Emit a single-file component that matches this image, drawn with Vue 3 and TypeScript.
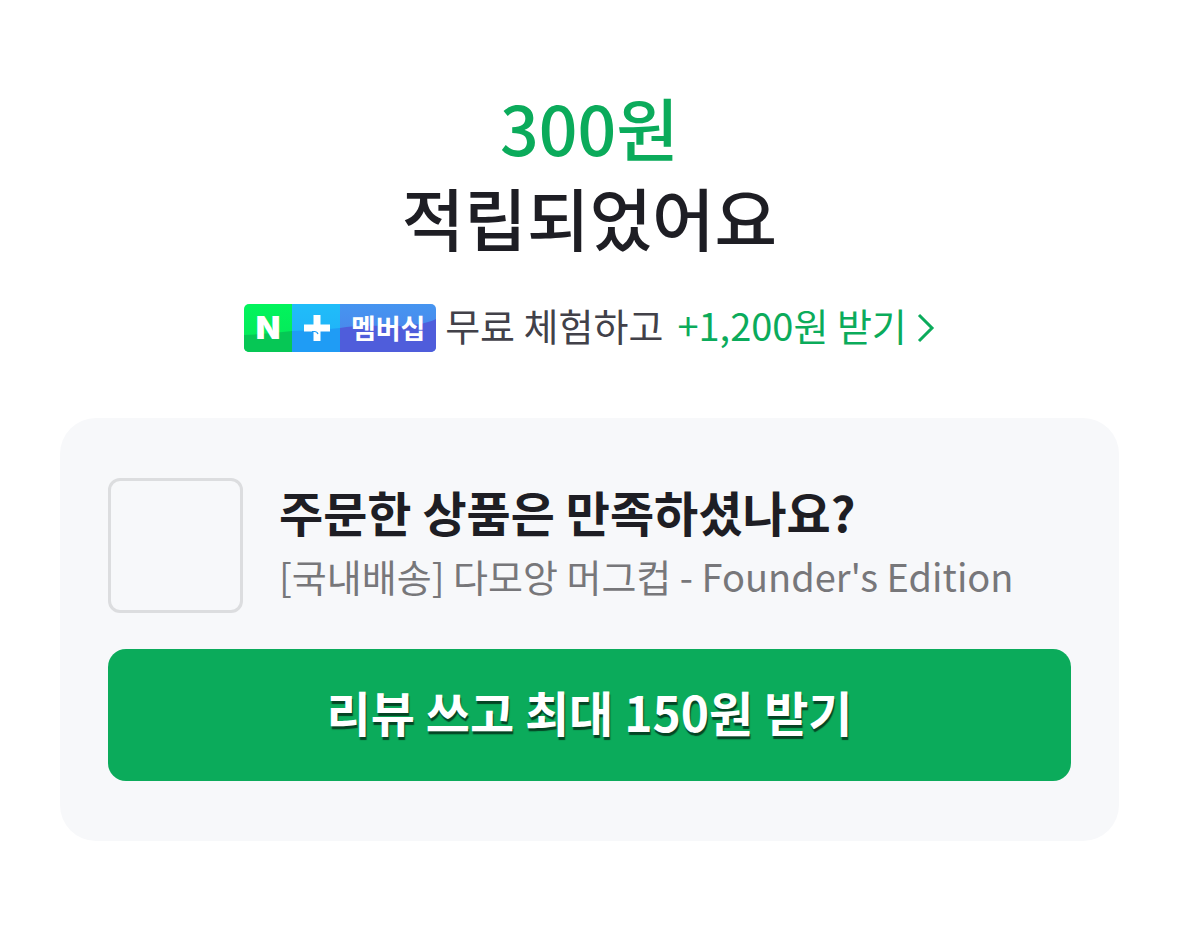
<script setup lang="ts">
interface Reward {
  amount: string
  message: string
}

interface Product {
  question: string
  name: string
  action: string
}

const reward: Reward = { amount: '300원', message: '적립되었어요' }

const product: Product = {
  question: '주문한 상품은 만족하셨나요?',
  name: "[국내배송] 다모앙 머그컵 - Founder's Edition",
  action: '리뷰 쓰고 최대 150원 받기',
}
</script>

<template>
  <main class="page">
    <h1 class="title">
      <span class="amount">{{ reward.amount }}</span>
      <span>{{ reward.message }}</span>
    </h1>

    <a class="membership" href="#">
      <span class="badge">
        <svg class="badge-bg" viewBox="0 0 192 48" aria-hidden="true">
          <defs>
            <linearGradient id="greenTop" x1="0" y1="0" x2="0" y2="1">
              <stop offset="0" stop-color="#02f45c" />
              <stop offset="1" stop-color="#06e65a" />
            </linearGradient>
            <linearGradient id="blueTop" x1="0" y1="0" x2="0" y2="1">
              <stop offset="0" stop-color="#20bdf9" />
              <stop offset="1" stop-color="#20aef8" />
            </linearGradient>
            <linearGradient id="indigoTop" x1="0" y1="0" x2="0" y2="1">
              <stop offset="0" stop-color="#4695f0" />
              <stop offset="1" stop-color="#4c7fea" />
            </linearGradient>
          </defs>
          <rect width="48" height="48" fill="url(#greenTop)" />
          <rect x="48" width="48" height="48" fill="url(#blueTop)" />
          <rect x="96" width="96" height="48" fill="url(#indigoTop)" />
          <path d="M0 31Q24 30 48 27V48H0Z" fill="#06c755" />
          <path d="M48 27Q72 27 96 24V48H48Z" fill="#1f9cf5" />
          <path d="M96 24Q112 21 144 22T192 15V48H96Z" fill="#4f5ddb" />
          <path d="M69.500 11H76.500V20.500H86V27.500H76.500V37H69.500V27.500H60V20.500H69.500Z" fill="#fff" />
          <path d="M68 27.500H70.500Q73 27.500 74 30" fill="none" stroke="#1f9cf5" stroke-width="1.200" />
        </svg>
        <span class="mark">N</span>
        <span class="badge-label">멤버십</span>
      </span>
      <span class="trial">무료 체험하고</span>
      <span class="benefit">+1,200원 받기</span>
      <svg class="chevron" viewBox="0 0 18 30" aria-hidden="true">
        <path d="M2 2L15 15L2 28" fill="none" stroke="currentColor" stroke-width="3" />
      </svg>
    </a>

    <section class="card">
      <div class="product">
        <div class="thumb"></div>
        <div class="info">
          <h2 class="question">{{ product.question }}</h2>
          <p class="name">{{ product.name }}</p>
        </div>
      </div>
      <button class="review" type="button">{{ product.action }}</button>
    </section>
  </main>
</template>

<style>
body {
  margin: 0;
  background: #fff;
}
</style>

<style scoped>
.page {
  box-sizing: border-box;
  display: flex;
  flex-direction: column;
  align-items: center;
  padding: 82px 60px 96px;
  font-family: "Noto Sans CJK KR", "Noto Sans", sans-serif;
  color: #1e1e24;
}

.title {
  display: flex;
  flex-direction: column;
  align-items: center;
  margin: 0;
  font-size: 68px;
  font-weight: 500;
  line-height: 90px;
}

.amount {
  color: #0bab5b;
}

.membership {
  display: flex;
  align-items: flex-start;
  margin-top: 42px;
  font-size: 38px;
  line-height: 42px;
  color: #424149;
  text-decoration: none;
  white-space: nowrap;
}

.badge {
  display: grid;
  grid-template-columns: 48px 48px 96px;
  align-items: center;
  justify-items: center;
  height: 48px;
  border-radius: 5px;
  overflow: hidden;
  color: #fff;
}

.badge-bg {
  grid-area: 1 / 1 / 2 / 4;
  width: 192px;
  height: 48px;
}

.mark {
  grid-area: 1 / 1;
  font-family: Inter, sans-serif;
  font-size: 32px;
  font-weight: 900;
}

.badge-label {
  grid-area: 1 / 3;
  font-size: 27px;
  font-weight: 700;
}

.trial {
  margin-left: 9px;
}

.benefit {
  margin-left: 14px;
  color: #0bab5b;
}

.chevron {
  align-self: center;
  width: 18px;
  height: 30px;
  margin-left: 10px;
  color: #0bab5b;
}

.card {
  box-sizing: border-box;
  align-self: stretch;
  margin-top: 66px;
  padding: 60px 48px;
  border-radius: 36px;
  background: #f7f8fa;
}

.product {
  display: flex;
  align-items: flex-start;
  gap: 36px;
}

.thumb {
  box-sizing: border-box;
  flex: none;
  width: 135px;
  height: 135px;
  border: 3px solid #dcdddf;
  border-radius: 12px;
}

.question {
  margin: 0;
  font-size: 48px;
  font-weight: 700;
  line-height: 66px;
}

.name {
  margin: 0;
  font-size: 38px;
  line-height: 64px;
  color: #77777a;
}

.review {
  display: block;
  width: 100%;
  height: 132px;
  margin-top: 36px;
  padding: 0 0 8px;
  border: 0;
  border-radius: 18px;
  background: #0bab5b;
  color: #fff;
  font-family: inherit;
  font-size: 48px;
  font-weight: 700;
  text-shadow: 1px 3px 1px rgba(0, 0, 0, 0.6);
  cursor: pointer;
}
</style>
